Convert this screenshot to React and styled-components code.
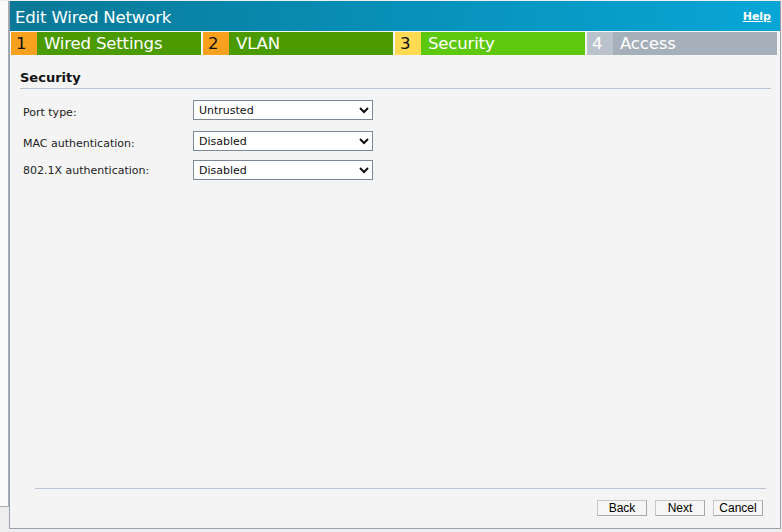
import styled, { createGlobalStyle } from "styled-components";

const GlobalStyle = createGlobalStyle`
  html, body {
    margin: 0;
    padding: 0;
    background: #f2f2f2;
  }
  body {
    font-family: "DejaVu Sans", Verdana, sans-serif;
  }
`;

const Page = styled.div`
  width: 782px;
  height: 532px;
  overflow: hidden;
  display: flex;
  padding: 1px 1px 0 0;
  box-sizing: border-box;
  background: #eeeeee;
`;

const BackStrip = styled.div`
  width: 9px;
  height: 506px;
  flex: none;
  box-sizing: border-box;
  border-right: 1px solid #a4acb4;
  border-bottom: 1px solid #a4acb4;
  background: #fafafa;
`;

const Dialog = styled.div`
  width: 772px;
  height: 528px;
  box-sizing: border-box;
  border: 1px solid #98a2ac;
  border-top: none;
  background: #f4f4f4;
  display: flex;
  flex-direction: column;
`;

const TitleBar = styled.div`
  height: 30px;
  display: flex;
  align-items: center;
  justify-content: space-between;
  padding: 0 9px 0 5px;
  background: linear-gradient(to right, #0a7896 0%, #0890b8 50%, #08a6d6 100%);
  color: #ffffff;
`;

const Title = styled.div`
  font-size: 16.6px;
  letter-spacing: -0.2px;
  padding-top: 2px;
`;

const HelpLink = styled.a`
  font-family: Tahoma, "DejaVu Sans", sans-serif;
  font-size: 11px;
  font-weight: bold;
  color: #ffffff;
  text-decoration: underline;
  cursor: pointer;
  margin-top: 1px;
`;

const Steps = styled.div`
  display: flex;
  gap: 2px;
  padding: 1px 2px 0 1px;
  height: 23px;
  box-sizing: content-box;
`;

const Step = styled.div`
  width: 190px;
  display: flex;
  font-size: 16.6px;
  line-height: 24px;
`;

const StepNumber = styled.div`
  width: 26px;
  flex: none;
  box-sizing: border-box;
  padding-left: 5px;
  background: ${(p) => p.$bg};
  color: ${(p) => p.$color};
`;

const StepLabel = styled.div`
  flex: 1;
  padding-left: 7px;
  background: ${(p) => p.$bg};
  color: #ffffff;
  letter-spacing: -0.2px;
`;

const Body = styled.div`
  flex: 1;
  display: flex;
  flex-direction: column;
  padding: 0 0 0 10px;
`;

const SectionTitle = styled.div`
  margin-top: 15px;
  margin-right: 9px;
  padding: 0 0 3px 0;
  border-bottom: 1px solid #b8c4d2;
  font-size: 13px;
  font-weight: bold;
  color: #111111;
`;

const Form = styled.div`
  display: flex;
  flex-direction: column;
  margin-top: 11px;
  padding-left: 3px;
`;

const Row = styled.div`
  display: grid;
  grid-template-columns: 170px 180px;
  align-items: center;
  margin-bottom: ${(p) => p.$gap}px;
`;

const Label = styled.label`
  font-size: 11px;
  color: #222222;
  padding-top: ${(p) => p.$dy || 0}px;
`;

const Select = styled.select`
  width: 180px;
  height: 20px;
  box-sizing: border-box;
  border: 1px solid #7c8894;
  background: #ffffff;
  font-family: "DejaVu Sans", Verdana, sans-serif;
  font-size: 11px;
  color: #111111;
  padding: 0 0 0 1px;
  border-radius: 0;
`;

const Spacer = styled.div`
  flex: 1;
`;

const Footer = styled.div`
  margin: 0 14px 0 15px;
  border-top: 1px solid #b8c4d2;
  height: 40px;
  box-sizing: border-box;
  display: flex;
  justify-content: flex-end;
  align-items: flex-start;
  gap: 8px;
  padding: 11px 3px 0 0;
`;

const Button = styled.button`
  width: 50px;
  height: 16px;
  box-sizing: border-box;
  padding: 0;
  border: 1px solid #c8c8c8;
  border-right-color: #a8a8a8;
  border-bottom-color: #a8a8a8;
  background: #f6f6f6;
  font-family: "Liberation Sans", Arial, sans-serif;
  font-size: 12px;
  line-height: 14px;
  color: #000000;
`;

const steps = [
  { n: 1, label: "Wired Settings", numBg: "#f8a11e", numColor: "#111", bg: "#4a9a00" },
  { n: 2, label: "VLAN", numBg: "#f8a11e", numColor: "#111", bg: "#4a9a00" },
  { n: 3, label: "Security", numBg: "#ffda52", numColor: "#111", bg: "#5dc80c" },
  { n: 4, label: "Access", numBg: "#bac2cc", numColor: "#ffffff", bg: "#a6b0ba" },
];

const fields = [
  { label: "Port type:", value: "Untrusted", options: ["Untrusted", "Trusted"], dy: 4, gap: 11 },
  { label: "MAC authentication:", value: "Disabled", options: ["Disabled", "Enabled"], dy: 4, gap: 9 },
  { label: "802.1X authentication:", value: "Disabled", options: ["Disabled", "Enabled"], dy: 0, gap: 0 },
];

export default function App() {
  return (
    <>
      <GlobalStyle />
      <Page>
        <BackStrip />
        <Dialog>
          <TitleBar>
            <Title>Edit Wired Network</Title>
            <HelpLink>Help</HelpLink>
          </TitleBar>
          <Steps>
            {steps.map((s) => (
              <Step key={s.n}>
                <StepNumber $bg={s.numBg} $color={s.numColor}>
                  {s.n}
                </StepNumber>
                <StepLabel $bg={s.bg}>{s.label}</StepLabel>
              </Step>
            ))}
          </Steps>
          <Body>
            <SectionTitle>Security</SectionTitle>
            <Form>
              {fields.map((f) => (
                <Row key={f.label} $gap={f.gap}>
                  <Label $dy={f.dy}>{f.label}</Label>
                  <Select defaultValue={f.value}>
                    {f.options.map((o) => (
                      <option key={o}>{o}</option>
                    ))}
                  </Select>
                </Row>
              ))}
            </Form>
            <Spacer />
            <Footer>
              <Button>Back</Button>
              <Button>Next</Button>
              <Button>Cancel</Button>
            </Footer>
          </Body>
        </Dialog>
      </Page>
    </>
  );
}
